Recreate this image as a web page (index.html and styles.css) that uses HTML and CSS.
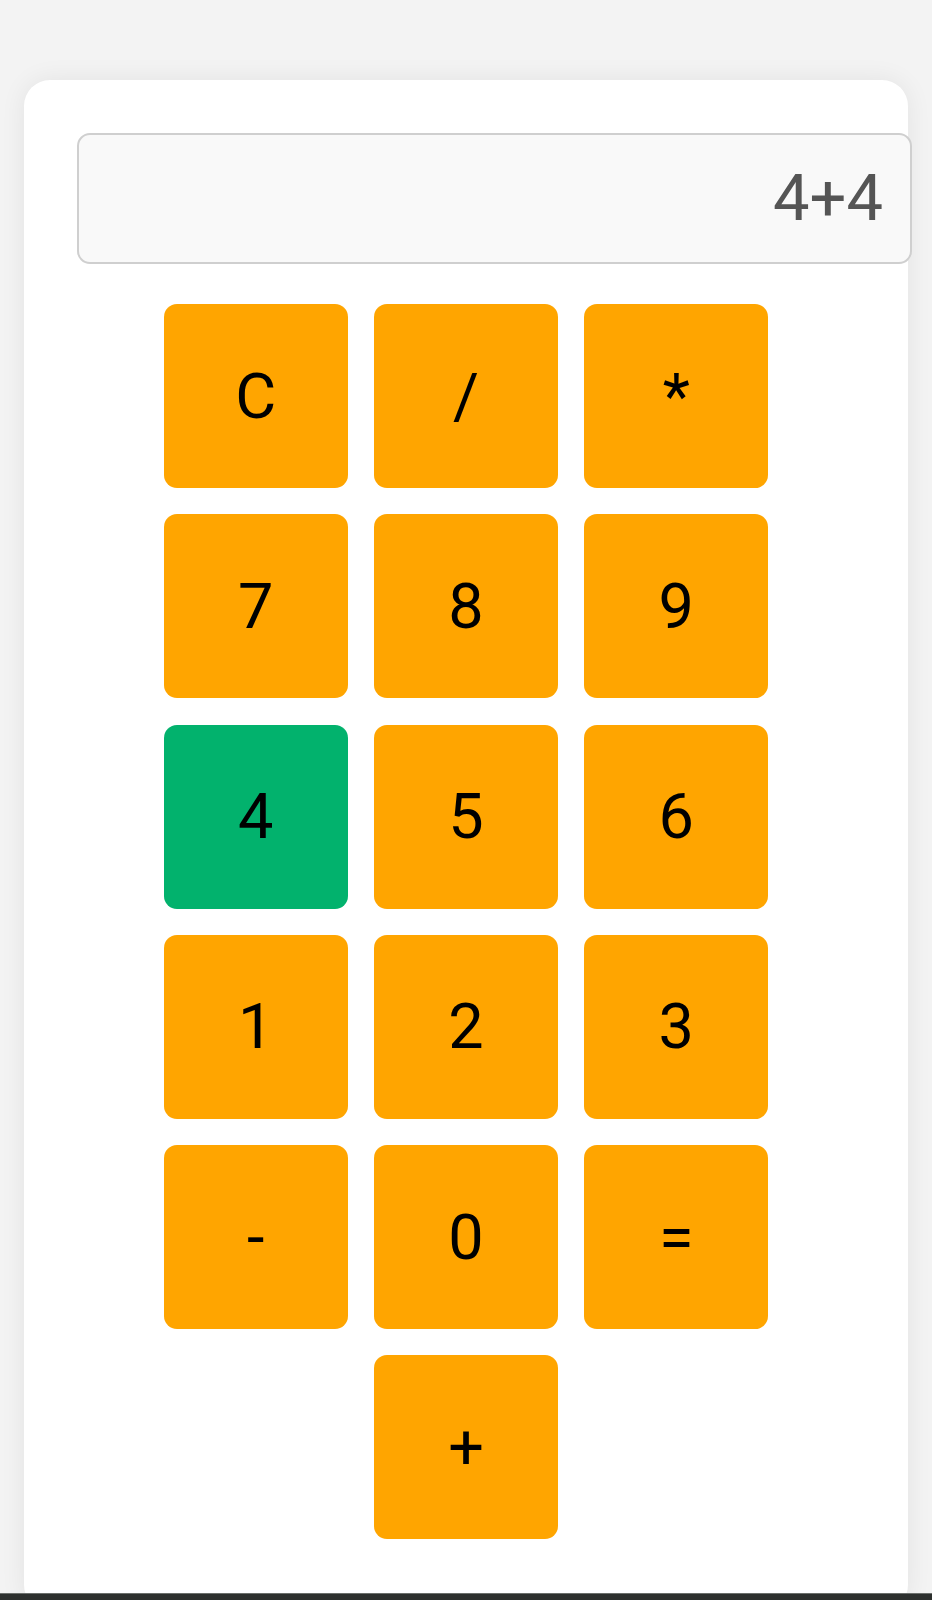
FILE: index.html
```html
<!DOCTYPE html>
<html lang="en">
<head>
<meta charset="utf-8">
<title>Calculator</title>
<link rel="stylesheet" href="styles.css">
</head>
<body>
<div class="card">
  <div class="display">4+4</div>
  <div class="keys">
    <button class="key">C</button>
    <button class="key">/</button>
    <button class="key">*</button>
    <button class="key">7</button>
    <button class="key">8</button>
    <button class="key">9</button>
    <button class="key key-active">4</button>
    <button class="key">5</button>
    <button class="key">6</button>
    <button class="key">1</button>
    <button class="key">2</button>
    <button class="key">3</button>
    <button class="key">-</button>
    <button class="key">0</button>
    <button class="key">=</button>
    <button class="key key-plus">+</button>
  </div>
</div>
<div class="navbar"></div>
</body>
</html>
```

FILE: styles.css
```css
html, body {
  margin: 0;
  padding: 0;
}
body {
  background: #f3f3f3;
  font-family: Roboto, "Liberation Sans", sans-serif;
  height: 1600px;
  overflow: hidden;
}
.card {
  box-sizing: border-box;
  width: 884px;
  margin: 80px 0 0 24px;
  padding: 53px 53px 72px 53px;
  background: #ffffff;
  border-radius: 26px;
  box-shadow: 0 0 26px rgba(0, 0, 0, 0.07);
}
.display {
  box-sizing: content-box;
  width: 100%;
  height: 127px;
  padding: 0 27px 0 26px;
  border: 2px solid #cfcfcf;
  border-radius: 13px;
  background: #f9f9f9;
  color: #555555;
  font-size: 65px;
  line-height: 127px;
  text-align: right;
}
.keys {
  margin-top: 40px;
  display: grid;
  grid-template-columns: repeat(3, 184px);
  grid-auto-rows: 184px;
  column-gap: 26.3px;
  row-gap: 26.3px;
  justify-content: center;
}
.key {
  border: none;
  border-radius: 13px;
  background: #ffa500;
  color: #000000;
  font-family: Roboto, "Liberation Sans", sans-serif;
  font-size: 63px;
  padding: 0;
  margin: 0;
}
.key-active {
  background: #02b26d;
}
.key-plus {
  grid-column: 2;
}
.navbar {
  position: fixed;
  left: 0;
  right: 0;
  bottom: 0;
  height: 6px;
  background: #2d302e;
  border-top: 1px solid #6b6f6c;
}
```
